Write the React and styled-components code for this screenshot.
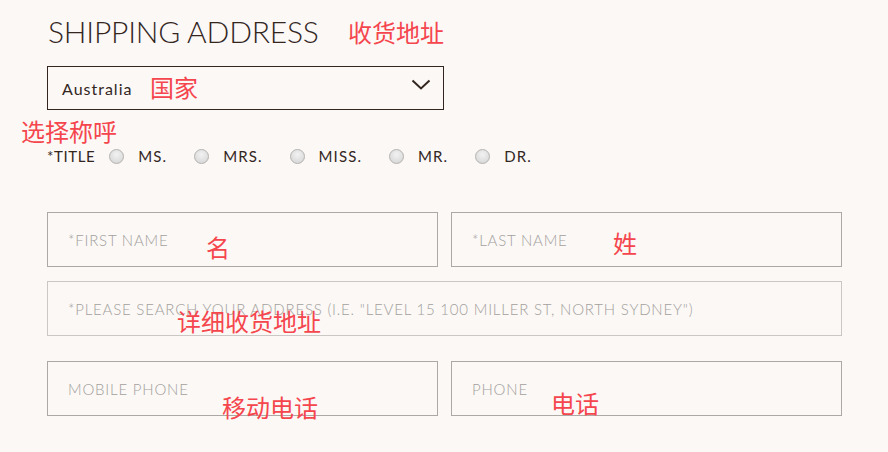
import React from 'react';
import styled, { createGlobalStyle } from 'styled-components';

const GlobalStyle = createGlobalStyle`
  html, body {
    margin: 0;
    padding: 0;
    background: #fbf8f5;
  }
  body {
    font-family: Lato, "Noto Sans", sans-serif;
    color: #33261f;
  }
`;

const titles = ['MS.', 'MRS.', 'MISS.', 'MR.', 'DR.'];

const notes = [
  { text: '收货地址', x: 348, y: 20 },
  { text: '国家', x: 150, y: 75 },
  { text: '选择称呼', x: 21, y: 119 },
  { text: '名', x: 206, y: 235 },
  { text: '姓', x: 613, y: 231 },
  { text: '详细收货地址', x: 177, y: 309 },
  { text: '移动电话', x: 222, y: 395 },
  { text: '电话', x: 551, y: 391 },
];

const App = () => {
  return (
    <>
      <GlobalStyle />
      <Page>
        <Heading>SHIPPING ADDRESS</Heading>

        <Select>
          <SelectValue>Australia</SelectValue>
          <svg width="20" height="12" viewBox="0 0 20 12">
            <polyline points="1.5,1.5 10,9.5 18.5,1.5" fill="none" stroke="#33261f" strokeWidth="2" />
          </svg>
        </Select>

        <TitleRow>
          <TitleLabel>*TITLE</TitleLabel>
          {titles.map((t) => (
            <RadioOption key={t}>
              <Radio type="radio" name="title" />
              <OptionText>{t}</OptionText>
            </RadioOption>
          ))}
        </TitleRow>

        <Fields>
          <Field placeholder="*FIRST NAME" />
          <Field placeholder="*LAST NAME" />
          <Field $wide $light placeholder={'*PLEASE SEARCH YOUR ADDRESS (I.E. "LEVEL 15 100 MILLER ST, NORTH SYDNEY")'} />
          <Field $spaced placeholder="MOBILE PHONE" />
          <Field $spaced placeholder="PHONE" />
        </Fields>

        {notes.map((n) => (
          <Note key={n.text + n.x} $x={n.x} $y={n.y}>{n.text}</Note>
        ))}
      </Page>
    </>
  );
};

export default App;

const Page = styled.div`
  position: relative;
  width: 888px;
  height: 452px;
  box-sizing: border-box;
  padding: 13px 46px 0 47px;
  overflow: hidden;
`;

const Heading = styled.h1`
  margin: 0;
  font-family: Lato, sans-serif;
  font-weight: 300;
  font-size: 30px;
  line-height: 36px;
  letter-spacing: -0.2px;
  color: #33261f;
  padding-left: 1px;
`;

const Select = styled.div`
  margin-top: 17px;
  width: 397px;
  height: 44px;
  box-sizing: border-box;
  border: 1px solid #33261f;
  display: flex;
  align-items: center;
  justify-content: space-between;
  padding: 0 12px 0 14px;

  svg {
    margin-top: -6px;
  }
`;

const SelectValue = styled.span`
  font-size: 16px;
  letter-spacing: 1px;
  color: #33261f;
`;

const TitleRow = styled.div`
  margin-top: 36px;
  height: 20px;
  display: flex;
  align-items: center;
  gap: 27px;
`;

const TitleLabel = styled.span`
  font-size: 15px;
  letter-spacing: 0.6px;
  margin-right: -13px;
`;

const RadioOption = styled.label`
  display: flex;
  align-items: center;
  gap: 14px;
`;

const Radio = styled.input`
  appearance: none;
  margin: 0;
  width: 15px;
  height: 15px;
  border-radius: 50%;
  border: 1px solid #b4b2b0;
  background: radial-gradient(circle at 50% 35%, #f2f2f2 0%, #dcdcdc 70%, #d0d0d0 100%);
  box-sizing: border-box;
`;

const OptionText = styled.span`
  font-size: 15px;
  letter-spacing: 1.1px;
  color: #33261f;
`;

const Fields = styled.div`
  margin-top: 46px;
  width: 795px;
  display: grid;
  grid-template-columns: 1fr 1fr;
  column-gap: 13px;
  row-gap: 14px;
`;

const Field = styled.input`
  grid-column: ${(p) => (p.$wide ? '1 / -1' : 'auto')};
  margin-top: ${(p) => (p.$spaced ? '11px' : '0')};
  height: 55px;
  box-sizing: border-box;
  border: 1px solid ${(p) => (p.$light ? '#cac7c4' : '#aba8a5')};
  background: transparent;
  padding: 0 20px;
  font-family: Lato, sans-serif;
  font-weight: 300;
  font-size: 15px;
  letter-spacing: 0.8px;
  outline: none;

  &::placeholder {
    color: #a3a09d;
  }
`;

const Note = styled.span`
  position: absolute;
  left: ${(p) => p.$x}px;
  top: ${(p) => p.$y}px;
  font-family: "Noto Sans CJK SC", sans-serif;
  font-size: 24px;
  line-height: 1;
  color: #f5454d;
  white-space: nowrap;
  pointer-events: none;
`;
